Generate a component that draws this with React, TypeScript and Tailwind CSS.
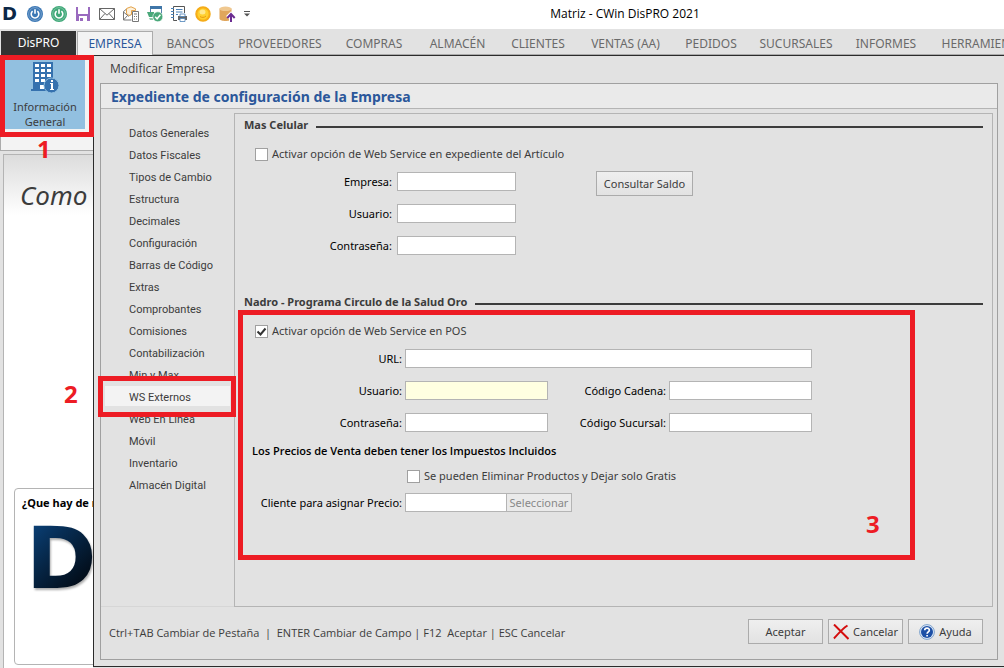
import { useState } from "react";
import type { ReactNode } from "react";

const tabs = [
  { name: "BANCOS", width: "w-[75px]" },
  { name: "PROVEEDORES", width: "w-[104px]" },
  { name: "COMPRAS", width: "w-[84px]" },
  { name: "ALMACÉN", width: "w-[83px]" },
  { name: "CLIENTES", width: "w-[78px]" },
  { name: "VENTAS (AA)", width: "w-[97px]" },
  { name: "PEDIDOS", width: "w-[74px]" },
  { name: "SUCURSALES", width: "w-[96px]" },
  { name: "INFORMES", width: "w-[84px]" },
  { name: "HERRAMIENTAS", width: "w-[116px]" },
];

const sections = [
  "Datos Generales",
  "Datos Fiscales",
  "Tipos de Cambio",
  "Estructura",
  "Decimales",
  "Configuración",
  "Barras de Código",
  "Extras",
  "Comprobantes",
  "Comisiones",
  "Contabilización",
  "Min y Max",
  "WS Externos",
  "Web En Linea",
  "Móvil",
  "Inventario",
  "Almacén Digital",
];

function PowerIcon({ color }: { color: string }) {
  return (
    <svg width="16" height="16" viewBox="0 0 16 16" fill="none">
      <circle cx="8" cy="8" r="8" fill={color} />
      <circle cx="8" cy="8" r="6.4" stroke="#fff" strokeOpacity="0.4" strokeWidth="0.7" />
      <path d="M5.6 5.2a3.8 3.8 0 1 0 4.8 0M8 3.2v4.6" stroke="#fff" strokeWidth="1.6" />
    </svg>
  );
}

function SaveIcon() {
  return (
    <svg width="16" height="16" viewBox="0 0 16 16" fill="none">
      <path d="M1 1h14v14H1z" fill="#9a6abf" />
      <path d="M3 1h10v7H3zM4 10h8v5H4z" fill="#fff" />
      <path d="M5 12h3v3H5z" fill="#9a6abf" />
    </svg>
  );
}

function MailIcon() {
  return (
    <svg width="16" height="16" viewBox="0 0 16 16" fill="none" stroke="#666" strokeWidth="1">
      <path d="M.5 2.5h15v11H.5zM.5 2.5 8 9.2l7.5-6.7M.5 13.5l5.500-6M15.500 13.500l-5.500-6" />
    </svg>
  );
}

function MailCalcIcon() {
  return (
    <svg width="16" height="16" viewBox="0 0 16 16" fill="none">
      <path d="M.5 5.500v8.500h8M.5 5.500 3 3.500M.5 6l5 4.200 3-2M.5 14l4-4.500" stroke="#777" />
      <path d="M3.500 7.500V2.500L8 .8l4.500 2V4.500h-4v4L6 9.500z" fill="#fdf1dc" stroke="#e3a34b" />
      <path d="M9.500 5.500h6v10h-6z" fill="#fff" stroke="#777" />
      <path d="M11 8h3M11 10.500h1M13 10.500h1M11 13h1M13 13h1" stroke="#777" />
    </svg>
  );
}

function WindowsCheckIcon() {
  return (
    <svg width="16" height="16" viewBox="0 0 16 16" fill="none">
      <path d="M3.500.5h11v8h-11z" fill="#fff" stroke="#5580a8" />
      <path d="M3 0h12v3H3z" fill="#3f76a8" />
      <path d="M0 6h7v5H2z" fill="#4aa87a" />
      <path d="M2 12h4v2H3z" fill="#8dc5a8" />
      <circle cx="10.800" cy="10.800" r="5" fill="#4aa87a" stroke="#fff" strokeWidth=".6" />
      <path d="m8.200 10.800 1.900 2 3.300-4" stroke="#fff" strokeWidth="1.500" />
    </svg>
  );
}

function ListPrinterIcon() {
  return (
    <svg width="16" height="16" viewBox="0 0 16 16" fill="none">
      <path d="M2.500.5h11V7M2.500.5v14H6" stroke="#555" />
      <path d="M0 2.500h3M0 5.500h3M0 8.500h3M0 11.500h3" stroke="#4b82b8" />
      <path d="M5 3.500h6.500M5 6h6.500M5 8.500h2" stroke="#4b82b8" />
      <path d="M7 10h9v4H7z" fill="#666" />
      <path d="M9 8h5v2.500H9zM9 12.500h5v3H9z" fill="#fff" stroke="#4b82b8" strokeWidth=".8" />
    </svg>
  );
}

function CoinIcon() {
  return (
    <svg width="16" height="16" viewBox="0 0 16 16" fill="none">
      <circle cx="8" cy="8" r="7" fill="#f9b51a" stroke="#f5ab17" strokeWidth="1.500" />
      <circle cx="8" cy="8" r="5.500" fill="#ffd02f" />
      <ellipse cx="7.500" cy="6" rx="3" ry="2.500" fill="#ffe88d" />
      <path d="M5 10.500c1.500 1.300 4.500 1.300 6-.5" stroke="#e99b12" />
    </svg>
  );
}

function DatabaseUpIcon() {
  return (
    <svg width="17" height="16" viewBox="0 0 17 16" fill="none">
      <path d="M.5 2.500v10c0 1.600 2.600 2.500 6 2.500s6-.9 6-2.500v-10z" fill="#e0a65c" />
      <ellipse cx="6.500" cy="2.800" rx="6" ry="2.300" fill="#f0c890" />
      <path d="M12 16V8.500M8.500 11.500 12 8l3.500 3.500" stroke="#fff" strokeWidth="4" />
      <path d="M12 16V8.500M8.300 12 12 8l3.700 4" stroke="#6b2c91" strokeWidth="2" />
    </svg>
  );
}

function BuildingIcon() {
  return (
    <svg className="shrink-0" width="30" height="32" viewBox="0 0 30 32" fill="none">
      <path d="M3 1h20v29H3zM1 28h18v2H1z" fill="#3571ae" />
      <g fill="#fff">
        <path d="M5 3h4v3H5zM11 3h4v3h-4zM17 3h4v3h-4zM5 8h4v3H5zM11 8h4v3h-4zM17 8h4v3h-4z" />
        <path d="M5 13h4v3H5zM11 13h4v3h-4zM17 13h4v3h-4zM5 18h4v3H5zM11 18h4v3h-4zM10 24h4v4h-4z" />
      </g>
      <circle cx="21.500" cy="24.500" r="7.500" fill="#3571ae" stroke="#92c0e0" />
      <path d="M21 19h2v2h-2zM20 22h3v6h1v1h-4v-1h1v-5h-1z" fill="#fff" />
    </svg>
  );
}

function CancelIcon() {
  return (
    <svg width="16" height="16" viewBox="0 0 16 16" fill="none">
      <path d="M1 0.500 15.500 15M14.500 1.500C9 5 5 10 1 14.500" stroke="#d40d0d" strokeWidth="2" />
    </svg>
  );
}

function HelpIcon() {
  return (
    <svg width="16" height="16" viewBox="0 0 16 16" fill="none">
      <circle cx="8" cy="8" r="7.400" fill="#dfe9f5" stroke="#7fa3cd" />
      <circle cx="8" cy="8" r="6" fill="#1c4fa6" />
      <path d="M5.700 6.300c.1-3 4.700-2.800 4.600-.1 0 1.600-2.200 1.700-2.200 3.600M8.100 10.900v1.700" stroke="#fff" strokeWidth="1.700" />
    </svg>
  );
}

function Field({ id, label, className = "", tinted = false }: { id: string; label: string; className?: string; tinted?: boolean }) {
  return (
    <>
      <label htmlFor={id} className="text-right whitespace-nowrap text-black">
        {label}
      </label>
      <input
        id={id}
        className={`h-[19px] w-full min-w-0 border border-[#b4b4b4] px-1 outline-none ${tinted ? "bg-[#ffffe1]" : "bg-white"} ${className}`}
      />
    </>
  );
}

function Check({ label, checked = false }: { label: string; checked?: boolean }) {
  const [on, setOn] = useState(checked);
  return (
    <label className="flex h-5 items-center gap-1">
      <span className="grid size-[13px]">
        <input
          type="checkbox"
          checked={on}
          onChange={() => setOn(!on)}
          className="col-start-1 row-start-1 size-[13px] appearance-none border border-[#a0a0a0] bg-white"
        />
        {on && (
          <svg className="pointer-events-none col-start-1 row-start-1" width="13" height="13" viewBox="0 0 13 13" fill="none">
            <path d="m2.500 6.500 3 3 5-6" stroke="#333" strokeWidth="2" />
          </svg>
        )}
      </span>
      <span className="whitespace-nowrap">{label}</span>
    </label>
  );
}

function Heading({ children }: { children: ReactNode }) {
  return (
    <h2 className="flex h-5 items-center gap-2 font-bold">
      <span className="whitespace-nowrap">{children}</span>
      <span className="mt-1 h-0.5 flex-1 bg-[#3c3c3c]" />
    </h2>
  );
}

function Button({ children, className = "" }: { children: ReactNode; className?: string }) {
  return (
    <button
      className={`flex h-[25px] items-center justify-center gap-1 border border-[#ababab] bg-linear-to-b from-[#efefef] to-[#e2e2e2] whitespace-nowrap ${className}`}
    >
      {children}
    </button>
  );
}

export default function App() {
  const [active, setActive] = useState("WS Externos");

  return (
    <div className="relative flex min-h-screen flex-col overflow-hidden bg-[#e2e2e2] font-['Noto_Sans',sans-serif] text-[11px] leading-4 text-[#3c3c3c]">
      <header className="flex h-7 items-center gap-2 bg-white pl-0.5 text-black">
        <span className="w-[17px] font-['DejaVu_Sans',sans-serif] text-lg leading-4 font-bold text-[#0b2747]">D</span>
        <PowerIcon color="#3c78b5" />
        <PowerIcon color="#3fa878" />
        <SaveIcon />
        <MailIcon />
        <MailCalcIcon />
        <WindowsCheckIcon />
        <ListPrinterIcon />
        <CoinIcon />
        <DatabaseUpIcon />
        <svg width="6" height="6" viewBox="0 0 6 6">
          <path d="M0 0h6v1H0zM0 2.500h6L3 5.500z" fill="#555" />
        </svg>
        <h1 className="flex-1 pr-3 text-center font-['Open_Sans',sans-serif] text-xs">Matriz - CWin DisPRO 2021</h1>
      </header>

      <nav className="flex h-[27px] border-t border-white pl-px text-xs text-[#6a6a6a]">
        <button className="mt-0.5 h-6 w-[75px] shrink-0 bg-[#333] text-white">DisPRO</button>
        <button className="mt-0.5 ml-px h-6 w-[76px] shrink-0 border border-b-0 border-[#ababab] bg-[#f3f3f3] text-[#2b579a]">EMPRESA</button>
        {tabs.map((tab) => (
          <button key={tab.name} className={`h-[26px] shrink-0 border-b border-[#ababab] pt-1 ${tab.width}`}>
            {tab.name}
          </button>
        ))}
      </nav>

      <div className="flex flex-1">
        <aside className="flex w-[93px] shrink-0 flex-col overflow-hidden">
          <div className="h-24 border-b border-l border-[#ababab] bg-[#f3f3f3] pt-[5px] pl-1">
            <button className="flex h-[69px] w-20 flex-col items-center bg-[#92c0e0] pt-px">
              <BuildingIcon />
              <span className="pt-1.5 leading-[15px]">Información General</span>
            </button>
          </div>

          <div className="mt-[3px] ml-[3px] flex flex-1 flex-col border-t border-l border-[#b4b4b4] bg-white bg-linear-to-b from-[#dcdcdc] to-white to-[60px] bg-no-repeat">
            <p className="pt-[22px] pl-4 text-[26px] leading-9 whitespace-nowrap italic">Como</p>
            <section className="mt-auto mb-[3px] ml-2.5 h-[177px] w-[200px] rounded-sm border border-[#b4b4b4] bg-white pt-1.5 pl-[7px]">
              <h2 className="font-bold whitespace-nowrap text-black">¿Que hay de nuevo?</h2>
              <div className="pt-2.5 pl-1">
                <span className="block w-20 bg-linear-to-br from-[#0b4580] to-[#020a14] to-80% bg-clip-text font-['DejaVu_Sans',sans-serif] text-[85px] leading-[76px] font-bold text-transparent drop-shadow-[1px_2px_1px_#0005]">
                  D
                </span>
              </div>
            </section>
          </div>
        </aside>

        <main className="mb-px flex min-w-0 flex-1 flex-col border-t border-b border-l border-[#2b2b2b] px-1.5 pb-1.5">
          <p className="h-[27px] pt-[5px] pl-2.5 font-['Open_Sans',sans-serif] text-xs">Modificar Empresa</p>

          <form className="flex flex-1 flex-col border border-[#a0a0a0]" onSubmit={(e) => e.preventDefault()}>
            <h2 className="h-[25px] border-b border-[#b4b4b4] bg-[#eaeaea] pl-2.5 text-sm leading-[26px] font-bold text-[#2b579a]">
              Expediente de configuración de la Empresa
            </h2>

            <div className="flex flex-1 pr-1">
              <div className="flex w-[133px] shrink-0 flex-col gap-0.5 border-b border-[#d6d6d6] px-1 pt-[13px] font-['Roboto',sans-serif] leading-6">
                {sections.map((name) => (
                  <button
                    key={name}
                    onClick={() => setActive(name)}
                    className={`h-5 pt-[3px] pl-6 text-left leading-[17px] whitespace-nowrap ${name === active ? "bg-[#f3f3f3]" : ""}`}
                  >
                    {name}
                  </button>
                ))}
              </div>

              <div className="mt-1 flex-1 border border-[#b4b4b4] px-[9px] pt-px">
                <Heading>Mas Celular</Heading>
                <div className="pt-[9px] pl-[11px]">
                  <Check label="Activar opción de Web Service en expediente del Artículo" />
                </div>
                <div className="flex items-start pt-[7px]">
                  <div className="grid grid-cols-[148px_119px] items-center gap-x-[5px] gap-y-[13px] pt-px">
                    <Field id="mc-empresa" label="Empresa:" />
                    <Field id="mc-usuario" label="Usuario:" />
                    <Field id="mc-clave" label="Contraseña:" />
                  </div>
                  <Button className="ml-20 w-[97px]">Consultar Saldo</Button>
                </div>

                <div className="pt-[37px]">
                  <Heading>Nadro - Programa Circulo de la Salud Oro</Heading>
                </div>
                <div className="pt-[9px] pl-[11px]">
                  <Check label="Activar opción de Web Service en POS" checked />
                </div>
                <div className="grid grid-cols-[158px_143px_115px_143px] items-center gap-x-[3px] gap-y-[13px] pt-2">
                  <Field id="na-url" label="URL:" className="col-span-3" />
                  <Field id="na-usuario" label="Usuario:" tinted />
                  <Field id="na-cadena" label="Código Cadena:" />
                  <Field id="na-clave" label="Contraseña:" />
                  <Field id="na-sucursal" label="Código Sucursal:" />
                </div>
                <p className="pt-[11px] pl-2 font-['Open_Sans',sans-serif] font-semibold text-black">
                  Los Precios de Venta deben tener los Impuestos Incluidos
                </p>
                <div className="pt-[7px] pl-[163px]">
                  <Check label="Se pueden Eliminar Productos y Dejar solo Gratis" />
                </div>
                <div className="flex pt-[7px]">
                  <div className="grid grid-cols-[158px_102px] items-center gap-x-[3px]">
                    <Field id="na-cliente" label="Cliente para asignar Precio:" />
                  </div>
                  <button className="h-[19px] w-[65px] border border-l-0 border-[#b4b4b4] bg-[#eaeaea] text-[#888]">Seleccionar</button>
                </div>
              </div>
            </div>

            <footer className="flex h-[52px] items-start justify-between pt-3 pr-3.5 pl-2">
              <p className="pt-1.5 font-['Open_Sans',sans-serif] whitespace-pre">Ctrl+TAB Cambiar de Pestaña  |  ENTER Cambiar de Campo | F12  Aceptar | ESC Cancelar</p>
              <div className="flex gap-[5px]">
                <Button className="w-[75px]">Aceptar</Button>
                <Button className="w-[75px]">
                  <CancelIcon />
                  Cancelar
                </Button>
                <Button className="w-[75px]">
                  <HelpIcon />
                  Ayuda
                </Button>
              </div>
            </footer>
          </form>
        </main>
      </div>

      {/* numbered step callouts */}
      <div className="pointer-events-none text-2xl leading-6 font-bold text-[#ed1c24]">
        <div className="absolute top-[55px] left-0 h-[82px] w-[94px] border-5 border-[#ed1c24]" />
        <div className="absolute top-[376px] left-[98px] h-[41px] w-[138px] border-5 border-[#ed1c24]" />
        <div className="absolute top-[310px] left-[238px] h-[250px] w-[677px] border-5 border-[#ed1c24]" />
        <span className="absolute top-[137px] left-[37px]">1</span>
        <span className="absolute top-[382px] left-16">2</span>
        <span className="absolute top-[512px] left-[866px]">3</span>
      </div>
    </div>
  );
}
